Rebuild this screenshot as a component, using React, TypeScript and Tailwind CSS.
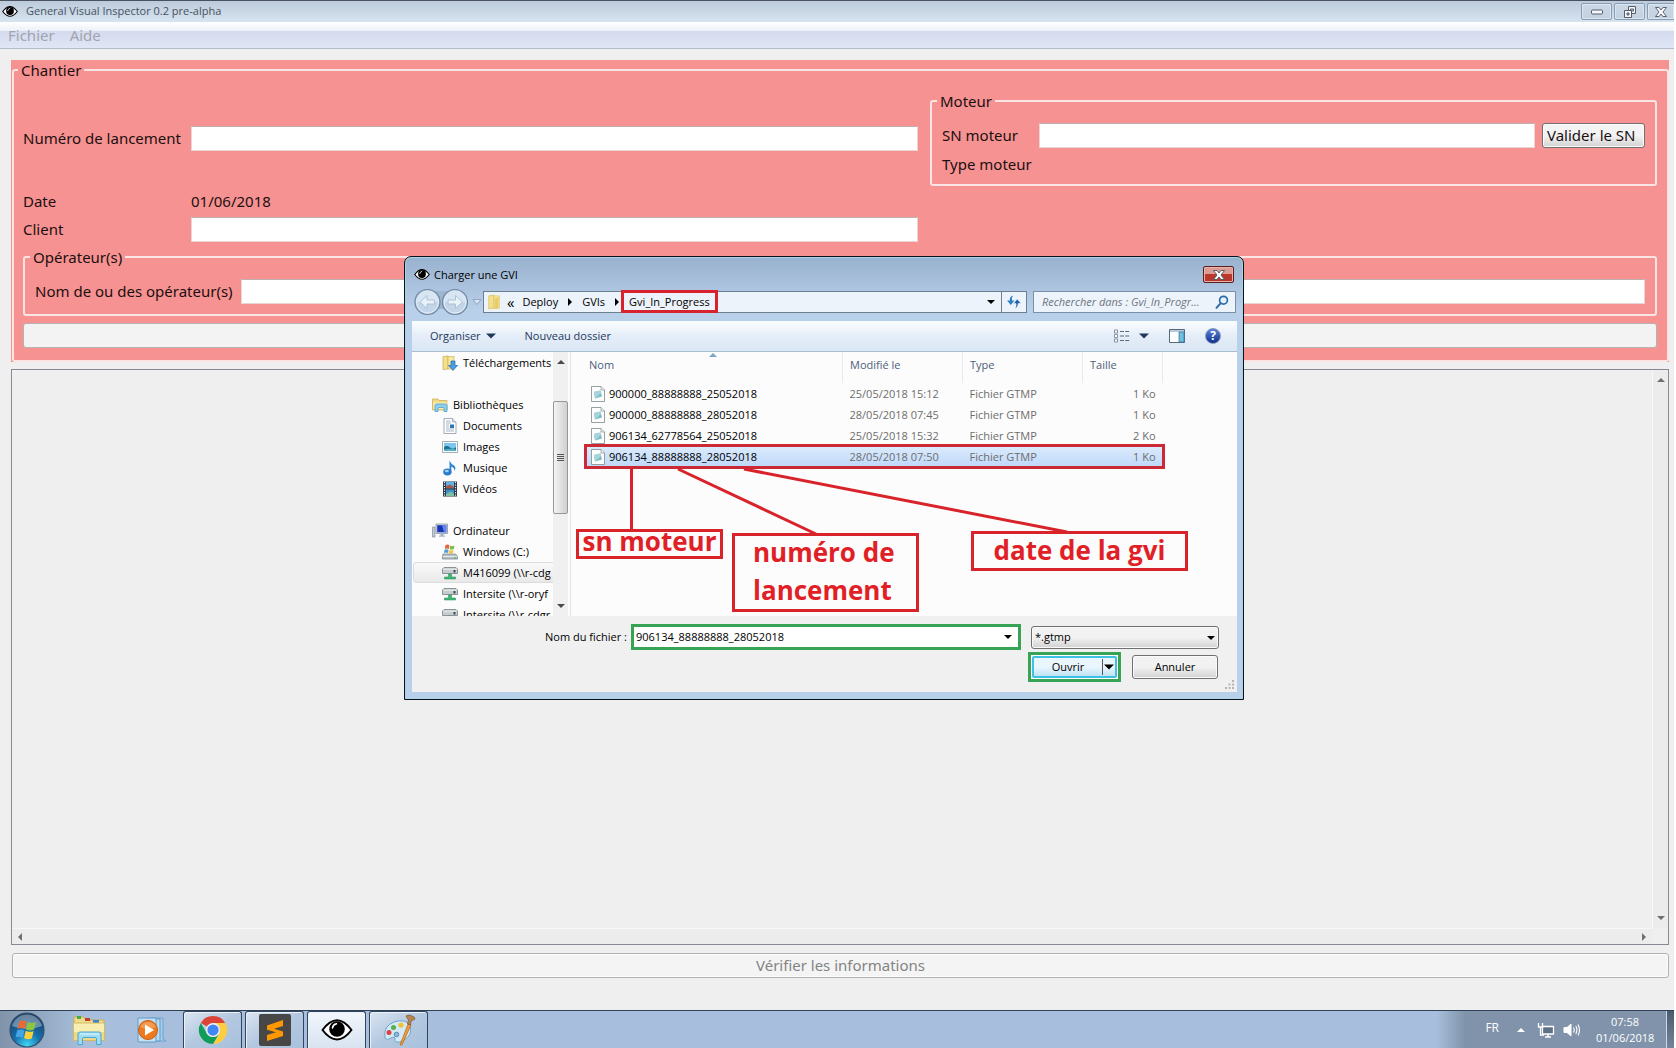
import React from "react";

/* ---------- small glyphs ---------- */

function Eye({ className = "", bold = false }: { className?: string; bold?: boolean }) {
  return (
    <svg viewBox="0 0 32 22" className={className} aria-hidden="true">
      <path d="M1.500 11Q16 -8.500 30.500 11Q16 30 1.500 11Z" fill="#fff" stroke="#000" strokeWidth={bold ? 2 : 2.400} strokeLinejoin="round" />
      <circle cx="16" cy="10" r="7.800" fill="#000" />
      <path d="M11.500 9A5 5 0 0 1 15.500 4.800" fill="none" stroke="#fff" strokeWidth="1.600" strokeLinecap="round" />
    </svg>
  );
}

function Caret({ dir = "down", className = "" }: { dir?: "down" | "up" | "left" | "right"; className?: string }) {
  const d = { down: "M0 2L8 2L4 6Z", up: "M0 6L8 6L4 2Z", left: "M6 0L6 8L2 4Z", right: "M2 0L2 8L6 4Z" }[dir];
  return (
    <svg viewBox="0 0 8 8" className={`shrink-0 ${className}`} aria-hidden="true">
      <path d={d} fill="currentColor" />
    </svg>
  );
}

const Folder = ({ className = "" }: { className?: string }) => (
  <svg viewBox="0 0 16 18" className={className} aria-hidden="true">
    <path d="M2 2L8 1V16L2 17Z" fill="#f3df8c" stroke="#d9bd5a" strokeWidth=".8" />
    <path d="M8 2H14V16H8Z" fill="#f8eaa8" stroke="#d9bd5a" strokeWidth=".8" />
    <path d="M9 5L13 3V16L9 17Z" fill="#e9cc66" />
  </svg>
);

const DownloadFolder = () => (
  <svg viewBox="0 0 16 16" className="size-4" aria-hidden="true">
    <path d="M1 1.500L6 1V14L1 14.500Z" fill="#f3df8c" stroke="#c9a94c" strokeWidth=".7" />
    <path d="M6 1.500H12V14H6Z" fill="#f8e9a0" stroke="#d2b45a" strokeWidth=".7" />
    <path d="M9 6H13V10.500H15.500L11 15.500L6.500 10.500H9Z" fill="#4a9fe0" stroke="#1c6bb0" strokeWidth=".7" />
  </svg>
);

const LibraryIcon = () => (
  <svg viewBox="0 0 16 16" className="size-4" aria-hidden="true">
    <path d="M.5 2H6L7 3.500H15V13H.5Z" fill="#f1dc86" stroke="#cba94b" strokeWidth=".7" />
    <path d="M1.500 5.500H15V12H1.500Z" fill="#f9efb9" />
    <path d="M3 8.500Q3 7 4.500 7H13.500Q15 7 15 8.500V14.500H12V11.500Q12 10.500 11 10.500H7Q6 10.500 6 11.500V14.500H3Z" fill="#8ed0ee" stroke="#3d97c8" strokeWidth=".7" />
  </svg>
);

const DocumentIcon = () => (
  <svg viewBox="0 0 16 16" className="size-4" aria-hidden="true">
    <path d="M2 .5H10.500L14 4V15.500H2Z" fill="#fff" stroke="#8b98a5" strokeWidth=".8" />
    <path d="M10.500 .5V4H14" fill="#dfe6ee" stroke="#8b98a5" strokeWidth=".7" />
    <path d="M4 3H8.500M4 5H9M4 7H7M4 9H7M4 11H12M4 13H12" stroke="#8fa3b8" strokeWidth=".8" />
    <path d="M8 6.500H12V10H8Z" fill="#2f73ad" />
  </svg>
);

const ImageIcon = () => (
  <svg viewBox="0 0 16 16" className="size-4" aria-hidden="true">
    <path d="M.5 2.500H15.500V13.500H.5Z" fill="#fff" stroke="#8d99a6" strokeWidth=".8" />
    <path d="M2 4H14V12H2Z" fill="#7cc7ee" />
    <path d="M2 8Q5 6 8 8.500T14 8V12H2Z" fill="#1f6f8a" />
    <path d="M2 10.500Q8 9 14 10.500V12H2Z" fill="#53b1c9" />
  </svg>
);

const MusicIcon = () => (
  <svg viewBox="0 0 16 16" className="size-4" aria-hidden="true">
    <path d="M7.500 0.500Q9 4 12 5.500Q14.500 7.500 12.500 11Q12.500 7.500 9.300 6.500V12.500H7.500Z" fill="#2f86cf" />
    <ellipse cx="5.400" cy="12" rx="4.200" ry="3.400" fill="#2a7dc9" />
    <ellipse cx="4.800" cy="11" rx="2" ry="1.300" fill="#9dd2f6" />
  </svg>
);

const VideoIcon = () => (
  <svg viewBox="0 0 16 16" className="size-4" aria-hidden="true">
    <path d="M1 .5H15V15.500H1Z" fill="#2a3440" />
    <path d="M4 1H12V7.300H4Z" fill="#5db3ea" />
    <path d="M4 8.500H12V15H4Z" fill="#3e92cf" />
    <path d="M4 5L8 3.500L12 6V7.300H4Z" fill="#a05a4a" />
    <path d="M4 13L9 10.500L12 13V15H4Z" fill="#7ec0a0" />
    <path d="M2.500 1V15M13.500 1V15" stroke="#e8eef4" strokeWidth="1.200" strokeDasharray="1.300 1.200" />
  </svg>
);

const ComputerIcon = () => (
  <svg viewBox="0 0 16 16" className="size-4" aria-hidden="true">
    <path d="M.5 4H3V14H.5Z" fill="#c3ccd6" stroke="#76828f" strokeWidth=".6" />
    <path d="M4 1H15.500V10.500H4Z" fill="#d8e0ea" stroke="#7a8796" strokeWidth=".7" />
    <path d="M5.200 2.200H14.300V9.300H5.200Z" fill="#1735b5" />
    <path d="M10 2.200H14.300V9.300H12Z" fill="#5f86ee" />
    <path d="M8.500 10.500H11.500V12.500H13V13.800H7V12.500H8.500Z" fill="#aab5c2" />
  </svg>
);

const WindowsDriveIcon = () => (
  <svg viewBox="0 0 16 16" className="size-4" aria-hidden="true">
    <path d="M1 10H13.500L15.500 12.500V15H.5V12.500Z" fill="#b9c3c9" stroke="#6d7a80" strokeWidth=".7" />
    <path d="M3.500 1Q6 0 7.500 1.500L6.800 5Q5 4 2.800 4.800Z" fill="#e2673a" />
    <path d="M8.300 1.800Q10.500 2.700 12.500 1.800L11.700 5.200Q9.500 6 7.600 5.200Z" fill="#7fbb42" />
    <path d="M2.600 5.500Q4.800 4.800 6.600 5.900L5.900 9Q4 8.200 1.900 9Z" fill="#4d9fde" />
    <path d="M7.400 6Q9.500 7 11.500 6.100L10.800 9.300Q8.500 10 6.700 9.200Z" fill="#f2c33a" />
    <path d="M.8 12.500H15.200" stroke="#e9eef0" strokeWidth=".8" />
    <path d="M12 13.800H14" stroke="#3dbb54" strokeWidth="1" />
  </svg>
);

const NetDriveIcon = () => (
  <svg viewBox="0 0 16 16" className="size-4" aria-hidden="true">
    <path d="M2 2.500H14L15.500 4V8.500H.5V4Z" fill="#c5cbcf" stroke="#777f84" strokeWidth=".8" />
    <path d="M1 4.200H15" stroke="#f0f3f4" strokeWidth=".9" />
    <path d="M11.500 5H13.500V7.500H11.500Z" fill="#3a4a45" />
    <path d="M6.500 9H9.500V12H13.500V14H2.500V12H6.500Z" fill="#3fb873" stroke="#1f8c52" strokeWidth=".5" />
  </svg>
);

const FileIcon = () => (
  <svg viewBox="0 0 14 16" className="h-4 w-3.5 shrink-0" aria-hidden="true">
    <path d="M.5 .5H10L13.500 4V15.500H.5Z" fill="#fcfdfd" stroke="#8c9599" strokeWidth=".9" />
    <path d="M10 .5V4H13.500" fill="#e6ecee" stroke="#8c9599" strokeWidth=".7" />
    <path d="M3 6L9.500 4.500L11 10.500L4 12.500Z" fill="#7dbcc4" />
    <path d="M3 6L9.500 4.500L10 7L4 12.500Z" fill="#a5d5db" />
  </svg>
);

const CloseGlyph = () => (
  <svg viewBox="0 0 12 10" className="h-2.5 w-3" aria-hidden="true">
    <path d="M.5 .5H4L6 3L8 .5H11.500L8 5L11.500 9.500H8L6 7L4 9.500H.5L4 5Z" fill="#fafbfc" stroke="#4d5360" strokeWidth=".9" />
  </svg>
);

/* ---------- main window ---------- */

function WindowButton({ label, narrow = false, children }: { label: string; narrow?: boolean; children: React.ReactNode }) {
  return (
    <button
      aria-label={label}
      className={`flex h-[17px] items-center justify-center border border-[#8b9bb3] bg-gradient-to-b from-[#cbd8e6] to-[#c2d1e0] shadow-[inset_0_0_0_1px_#dbe6f0] ${narrow ? "w-[27px] rounded-l-[2px] border-r-0" : "w-[31px] rounded-[2px]"}`}
    >
      {children}
    </button>
  );
}

function TitleBar() {
  return (
    <header className="flex h-[22px] items-center border-t border-[#4a5262] bg-gradient-to-b from-[#bccbdb] to-[#d7e4f0] pl-[2px] font-['Open_Sans',sans-serif] text-[11px] text-[#46525f]">
      <Eye className="h-[11px] w-4" />
      <h1 className="ml-2 flex-1">General Visual Inspector 0.2 pre-alpha</h1>
      <div className="flex gap-[2px]">
        <WindowButton label="Réduire">
          <svg viewBox="0 0 12 6" className="h-1.5 w-3"><rect x=".5" y="1" width="11" height="4" rx="1" fill="#f4f6f9" stroke="#555d6b" /></svg>
        </WindowButton>
        <WindowButton label="Restaurer">
          <svg viewBox="0 0 12 12" className="size-3">
            <path d="M4.500 .5H11.500V7.500H4.500ZM6.500 3H9.500V5H6.500Z" fill="#f4f6f9" stroke="#555d6b" fillRule="evenodd" />
            <path d="M.5 4.500H7.500V11.500H.5ZM3 7H5V9H3Z" fill="#f4f6f9" stroke="#555d6b" fillRule="evenodd" />
          </svg>
        </WindowButton>
        <WindowButton label="Fermer" narrow><CloseGlyph /></WindowButton>
      </div>
    </header>
  );
}

const fieldClass = "h-[25px] w-full min-w-0 border border-[#e9d4d4] border-t-[#bfaeae] bg-white px-1 text-[15px] outline-none";
const groupClass = "min-w-0 rounded-[3px] border-2 border-[#fbe4e4]";
const legendClass = "-ml-[5px] h-5 px-[3px] leading-5";

function Chantier() {
  return (
    <div className="bg-[#f79292]">
      <fieldset className={`ml-px pr-2.5 pb-3 pl-[9px] ${groupClass}`}>
        <legend className={legendClass}>Chantier</legend>
        <div className="grid grid-cols-[156px_1fr_1fr] items-center gap-x-3 gap-y-[5px] pt-[11px]">
          <label htmlFor="lancement" className="whitespace-nowrap">Numéro de lancement</label>
          <input id="lancement" className={fieldClass} />
          <fieldset className={`pr-2.5 pb-2 pl-2.5 ${groupClass}`}>
            <legend className={legendClass}>Moteur</legend>
            <div className="grid grid-cols-[90px_1fr_103px] items-center gap-x-[7px] gap-y-1 pt-3">
              <label htmlFor="sn">SN moteur</label>
              <input id="sn" className={fieldClass} />
              <button className="h-[25px] rounded-[3px] border border-[#707070] bg-gradient-to-b from-[#f3f3f3] from-50% to-[#d2d2d2] pl-1 text-left whitespace-nowrap shadow-[inset_0_0_0_1px_#fbfbfb]">Valider le SN</button>
              <span className="col-span-3 leading-6">Type moteur</span>
            </div>
          </fieldset>
          <span className="leading-[21px]">Date</span>
          <span className="col-span-2 leading-[21px]">01/06/2018</span>
          <label htmlFor="client">Client</label>
          <input id="client" className={fieldClass} />
          <fieldset className={`col-span-3 pr-2.5 pb-2.5 pl-2.5 ${groupClass}`}>
            <legend className={legendClass}>Opérateur(s)</legend>
            <div className="flex items-center gap-2 pt-3">
              <label htmlFor="operateurs" className="whitespace-nowrap">Nom de ou des opérateur(s)</label>
              <input id="operateurs" className={fieldClass} />
            </div>
          </fieldset>
          <button aria-label="Valider les opérateurs" disabled className="col-span-3 mt-[2px] h-[25px] rounded-[3px] border border-[#b9b0b0] bg-[#f3f3f3]" />
        </div>
      </fieldset>
    </div>
  );
}

function ScrollArea() {
  return (
    <section aria-label="Inspection" className="grid flex-1 grid-cols-[1fr_16px] grid-rows-[1fr_16px] border border-[#868a95] bg-[#efefef] text-[#6f6f6f]">
      <div />
      <div className="flex flex-col items-center justify-between border-l border-[#f8f8f8] bg-[#ececec] py-1.5">
        <Caret dir="up" className="size-2" />
        <Caret className="size-2" />
      </div>
      <div className="flex items-center justify-between border-t border-[#f8f8f8] bg-[#ececec] px-1">
        <Caret dir="left" className="size-2" />
        <Caret dir="right" className="size-2" />
      </div>
    </section>
  );
}

/* ---------- file dialog ---------- */

const places: { label: string; icon: React.ReactNode; root?: boolean; gap?: boolean; active?: boolean }[] = [
  { label: "Téléchargements", icon: <DownloadFolder /> },
  { label: "Bibliothèques", icon: <LibraryIcon />, root: true, gap: true },
  { label: "Documents", icon: <DocumentIcon /> },
  { label: "Images", icon: <ImageIcon /> },
  { label: "Musique", icon: <MusicIcon /> },
  { label: "Vidéos", icon: <VideoIcon /> },
  { label: "Ordinateur", icon: <ComputerIcon />, root: true, gap: true },
  { label: "Windows (C:)", icon: <WindowsDriveIcon /> },
  { label: "M416099 (\\\\r-cdg", icon: <NetDriveIcon />, active: true },
  { label: "Intersite (\\\\r-oryf", icon: <NetDriveIcon /> },
  { label: "Intersite (\\\\r-cdgr", icon: <NetDriveIcon /> },
];

const files = [
  { name: "900000_88888888_25052018", date: "25/05/2018 15:12", size: "1 Ko" },
  { name: "900000_88888888_28052018", date: "28/05/2018 07:45", size: "1 Ko" },
  { name: "906134_62778564_25052018", date: "25/05/2018 15:32", size: "2 Ko" },
  { name: "906134_88888888_28052018", date: "28/05/2018 07:50", size: "1 Ko", selected: true },
];

function AddressBar() {
  return (
    <div className="flex h-[39px] items-center pr-px">
      <svg viewBox="0 0 54 28" className="ml-[2px] h-7 w-[54px] shrink-0" aria-hidden="true">
        <rect x="3" y="3" width="48" height="18" rx="9" fill="#9fb6cf" />
        {[13.5, 41].map((x) => (
          <g key={x}>
            <circle cx={x} cy="14" r="12.500" fill="#b7cce2" stroke="#6f86a0" strokeWidth="1.200" />
            <circle cx={x} cy="14" r="11" fill="#c3d5e8" stroke="#e6eff8" strokeWidth="1" />
            <path d={`M${x - 11} 14A11 11 0 0 1 ${x + 11} 14Z`} fill="#d8e5f2" />
          </g>
        ))}
        <path d="M6 14L13 7.500V12H20.500V16H13V20.500Z" fill="#e9f1f9" stroke="#a9bdd2" strokeWidth=".9" />
        <path d="M48.500 14L41.500 7.500V12H34V16H41.500V20.500Z" fill="#e9f1f9" stroke="#a9bdd2" strokeWidth=".9" />
      </svg>
      <svg viewBox="0 0 10 8" className="mr-px ml-1 h-2 w-2.5 shrink-0" aria-hidden="true">
        <path d="M1 1.500H9L5 6.500Z" fill="#dbe7f3" stroke="#8fa7c2" />
      </svg>
      <div className="flex h-[22px] flex-1 items-center border border-[#6f7f92] bg-[#edf3fa] pl-[3px]">
        <Folder className="h-4 w-3.5" />
        <nav aria-label="Chemin" className="flex flex-1 items-center">
          <span className="ml-1.5 text-[15px] leading-4">«</span>
          <a href="#deploy" className="ml-2">Deploy</a>
          <Caret dir="right" className="mx-2 size-2" />
          <a href="#gvis">GVIs</a>
          <Caret dir="right" className="ml-2 size-2" />
          <a href="#gvi-in-progress" className="border-3 border-[#d8232e] px-[5px] leading-[17px]">Gvi_In_Progress</a>
        </nav>
        <Caret className="mr-1.5 size-2" />
        <button aria-label="Actualiser" className="flex h-5 w-[25px] items-center justify-center border-l border-[#6f7f92]">
          <svg viewBox="0 0 16 14" className="h-3.5 w-4">
            <path d="M7 .5Q3.500 1.500 3.800 5.500H1L4.800 10L8.500 5.500H6Q5.500 2.500 7 .5Z" fill="#2b7fc4" />
            <path d="M9 13.500Q12.500 12.500 12.200 8.500H15L11.200 4L7.500 8.500H10Q10.500 11.500 9 13.500Z" fill="#1b5fa8" stroke="#edf3fa" strokeWidth=".6" />
          </svg>
        </button>
      </div>
      <div className="ml-1.5 flex h-[22px] w-[203px] items-center border border-[#7d8fa5] bg-[#edf3fa] pr-1.5 pl-2">
        <input aria-label="Rechercher" placeholder="Rechercher dans : Gvi_In_Progr..." className="w-full min-w-0 flex-1 bg-transparent italic outline-none placeholder:text-[#6d7580]" />
        <svg viewBox="0 0 14 14" className="size-3.5 shrink-0" aria-hidden="true">
          <circle cx="8.500" cy="5.200" r="3.900" fill="#e4f1fb" stroke="#2b6cab" strokeWidth="1.700" />
          <path d="M5.700 8.200L1.500 12.800" stroke="#2b6cab" strokeWidth="2" strokeLinecap="round" />
        </svg>
      </div>
    </div>
  );
}

function Toolbar() {
  return (
    <div className="flex h-[31px] items-center border-b border-[#a9bdd3] bg-gradient-to-b from-[#f8fbfe] from-10% via-[#e4edf8] via-50% to-[#dbe7f5] pr-4 pl-[18px] text-[#1e395b]">
      <button className="flex items-center gap-1">Organiser <Caret className="ml-px size-2.5" /></button>
      <button className="ml-[29px]">Nouveau dossier</button>
      <span className="flex-1" />
      <button aria-label="Affichage" className="flex items-center">
        <svg viewBox="0 0 16 14" className="h-3.5 w-4">
          <path d="M.5 1H3.500V4H.5ZM.5 5.500H3.500V8.500H.5ZM.5 10H3.500V13H.5Z" fill="#fff" stroke="#7b8898" strokeWidth=".9" />
          <path d="M6 2.500H15.500M6 7H15.500M6 11.500H15.500" stroke="#5c6b7e" strokeWidth="1.200" strokeDasharray="4 1.200" />
        </svg>
        <Caret className="ml-[9px] size-2.5" />
      </button>
      <button aria-label="Volet de visualisation" className="ml-5">
        <svg viewBox="0 0 16 14" className="h-3.5 w-4">
          <path d="M.5 .5H15.500V13.500H.5Z" fill="#fff" stroke="#56687c" />
          <path d="M1 1H15V3H1Z" fill="#b9c9da" />
          <path d="M10 3H15V13H10Z" fill="#6fbfe0" stroke="#3c7fa3" strokeWidth=".8" />
        </svg>
      </button>
      <button aria-label="Aide" className="ml-5 flex size-4 items-center justify-center rounded-full border border-[#8796b4] bg-gradient-to-b from-[#5c82d8] to-[#12308f] text-[12px] leading-none font-bold text-white">?</button>
    </div>
  );
}

function Places() {
  return (
    <aside className="flex w-[159px] shrink-0">
      <ul className="min-w-0 flex-1 overflow-hidden">
        {places.map((p, i) => (
          <li key={i} className={p.gap ? "pt-[21px]" : ""}>
            <div className={`flex h-[21px] items-center gap-[5px] whitespace-nowrap ${p.root ? "pl-5" : p.active ? "ml-px rounded-l-sm border border-r-0 border-[#dcdcdc] bg-gradient-to-b from-[#fafafa] to-[#e9e9e9] pl-7" : "pl-[30px]"}`}>
              <span className="shrink-0">{p.icon}</span>
              {p.label}
            </div>
          </li>
        ))}
      </ul>
      <div className="flex w-[15px] shrink-0 flex-col items-center bg-[#f0f0f0] py-1.5 text-[#4a4a4a]">
        <Caret dir="up" className="size-2" />
        <div className="mt-[35px] flex h-[113px] w-[15px] flex-col items-center justify-center gap-px rounded-[2px] border border-[#979797] bg-gradient-to-r from-[#f4f4f4] to-[#cfcfcf]">
          {[0, 1, 2, 3].map((n) => (
            <span key={n} className="h-px w-[7px] bg-[#555]" />
          ))}
        </div>
        <span className="flex-1" />
        <Caret className="size-2" />
      </div>
      <div className="w-[3px] border-r border-[#dfe6ee]" />
    </aside>
  );
}

function FileList() {
  const head = "relative h-[31px] border-r border-[#e3e9f1] pb-1.5 text-left align-middle font-normal text-[#4c607a]";
  return (
    <div className="relative flex-1 overflow-hidden pl-[15px]">
      <table className="w-[577px] table-fixed border-collapse">
        <colgroup>
          <col />
          <col className="w-[120px]" />
          <col className="w-[120px]" />
          <col className="w-20" />
        </colgroup>
        <thead>
          <tr>
            <th className={`${head} pl-[3px]`}>
              Nom
              <Caret dir="up" className="absolute -top-px left-[123px] size-2 text-[#7ba6c4]" />
            </th>
            <th className={`${head} pl-[7px]`}>Modifié le</th>
            <th className={`${head} pl-[7px]`}>Type</th>
            <th className={`${head} pl-[7px]`}>Taille</th>
          </tr>
        </thead>
        <tbody>
          {files.map((f) => (
            <tr key={f.name} className={`h-[21px] text-[#6d6d6d] ${f.selected ? "bg-gradient-to-b from-[#dcebfc] to-[#bed8fa] outline-3 -outline-offset-1 outline-[#cc2936]" : ""}`}>
              <td className="p-0 pl-[5px]">
                <span className="flex items-center gap-1 text-black">
                  <FileIcon />
                  {f.name}
                </span>
              </td>
              <td className="p-0 pl-[7px]">{f.date}</td>
              <td className="p-0 pl-[7px]">Fichier GTMP</td>
              <td className="p-0 pr-[7px] text-right">{f.size}</td>
            </tr>
          ))}
        </tbody>
      </table>
      <Annotations />
    </div>
  );
}

/* Callouts drawn over the list, explaining the parts of a file name. */
function Annotations() {
  return (
    <div className="pointer-events-none absolute inset-0 text-[26px] font-bold text-[#e11f26]">
      <svg viewBox="0 0 665 264" className="absolute top-0 left-0 h-[264px] w-[665px]" stroke="#d8232a" strokeWidth="3" aria-hidden="true">
        <path d="M60.500 117V178M107 117L245 182M173 117L496 180" fill="none" />
      </svg>
      <p className="absolute top-[177px] left-[5px] h-[30px] w-[147px] border-3 border-[#d8232a] text-center leading-[18px] whitespace-nowrap">sn moteur</p>
      <p className="absolute top-[181px] left-[161px] flex h-[79px] w-[187px] items-end border-3 border-[#d8232a] pl-[18px] leading-[38px]">numéro de lancement</p>
      <p className="absolute top-[179px] left-[400px] h-10 w-[217px] border-3 border-[#d8232a] text-center leading-8 whitespace-nowrap">date de la gvi</p>
    </div>
  );
}

function DialogFooter() {
  return (
    <div className="relative h-[76px] bg-[#f0f0f0] pt-2 pr-[18px]">
      <div className="flex h-[26px] items-center justify-end">
        <label htmlFor="nom-fichier">Nom du fichier :</label>
        <div className="ml-1 flex h-[26px] w-[390px] items-center border-3 border-[#37a354] bg-white pr-1.5">
          <input id="nom-fichier" defaultValue="906134_88888888_28052018" className="min-w-0 flex-1 pl-[2px] outline-none" />
          <Caret className="size-2" />
        </div>
        <div className="relative ml-[10px]">
          <select aria-label="Type de fichier" className="h-[23px] w-[188px] appearance-none rounded-[3px] border border-[#707070] bg-gradient-to-b from-[#f2f2f2] from-50% to-[#d2d2d2] pl-[3px] shadow-[inset_0_0_0_1px_#fafafa]">
            <option>*.gtmp</option>
          </select>
          <Caret className="pointer-events-none absolute top-2 right-1 size-2" />
        </div>
      </div>
      <div className="mt-[2px] flex items-center justify-end gap-[11px] pr-px">
        <div className="flex h-[30px] w-[93px] border-3 border-[#37a354] bg-white p-px">
          <div className="flex flex-1 rounded-[2px] border-2 border-[#3fc0e6] bg-gradient-to-b from-[#eaf6fd] from-50% to-[#bfe2f5]">
            <button className="flex-1">Ouvrir</button>
            <button aria-label="Options d'ouverture" className="my-px flex w-[13px] items-center justify-center border-l border-[#555]">
              <Caret className="size-2.5" />
            </button>
          </div>
        </div>
        <button className="h-6 w-[86px] rounded-[3px] border border-[#707070] bg-gradient-to-b from-[#f2f2f2] from-50% to-[#d2d2d2] shadow-[inset_0_0_0_1px_#fafafa]">Annuler</button>
      </div>
      <svg viewBox="0 0 10 10" className="absolute right-[2px] bottom-[2px] size-2.5" fill="#b5b5b5" aria-hidden="true">
        <path d="M7 0H9V2H7ZM7 3.500H9V5.500H7ZM7 7H9V9H7ZM3.500 3.500H5.500V5.500H3.500ZM3.500 7H5.500V9H3.500ZM0 7H2V9H0Z" />
      </svg>
    </div>
  );
}

function FileDialog() {
  return (
    <div role="dialog" aria-label="Charger une GVI" className="absolute top-[256px] left-[404px] w-[840px] rounded-t-[7px] border border-[#0b1118] bg-gradient-to-b from-[#98b1ce] to-[#b9d0ea] to-12% pr-1.5 pb-[7px] pl-[7px] font-['Open_Sans',sans-serif] text-[11px] leading-4 text-black shadow-[inset_0_0_0_1px_#a9d3e6]">
      <div className="flex h-[25px] items-center pt-2.5 pr-[3px] pl-[2px]">
        <Eye className="h-[11px] w-4" />
        <h2 className="ml-1 flex-1">Charger une GVI</h2>
        <button aria-label="Fermer" className="flex h-[17px] w-[31px] items-center justify-center rounded-[2px] border border-[#5a1f23] bg-gradient-to-b from-[#dd9c93] from-50% to-[#b8392b] to-50% shadow-[inset_0_0_0_1px_#e6b2aa]">
          <CloseGlyph />
        </button>
      </div>
      <AddressBar />
      <Toolbar />
      <div className="flex h-[264px] overflow-hidden bg-[#fcfcfc]">
        <Places />
        <FileList />
      </div>
      <DialogFooter />
    </div>
  );
}

/* ---------- taskbar ---------- */

const StartOrb = () => (
  <svg viewBox="0 0 36 36" className="size-9" aria-hidden="true">
    <defs>
      <radialGradient id="orb" cx=".5" cy=".95" r=".9">
        <stop offset="0" stopColor="#3fd8f5" />
        <stop offset=".45" stopColor="#1670ad" />
        <stop offset="1" stopColor="#1b3f66" />
      </radialGradient>
    </defs>
    <circle cx="18" cy="18" r="17" fill="url(#orb)" stroke="#35506d" strokeWidth="1.200" />
    <path d="M3 14A15.500 15.500 0 0 1 33 14Q18 20 3 14Z" fill="#fff" opacity=".35" />
    <path d="M10.500 9.500Q14 7.500 17.500 9.500L15.800 17Q12 15 8.500 17Z" fill="#ea6a35" />
    <path d="M18.700 10Q22.500 12 27 10L25 17.500Q21 19.500 17 17.500Z" fill="#8cc63f" />
    <path d="M8.200 18.300Q12 16.500 15.500 18.300L13.800 25.500Q10 24 6.500 25.500Z" fill="#45a5e6" />
    <path d="M16.700 18.800Q20.500 20.800 24.700 18.900L22.800 26.500Q19 28.200 15 26Z" fill="#fbcf3b" />
  </svg>
);

const ExplorerIcon = () => (
  <svg viewBox="0 0 34 32" className="h-8 w-[34px]" aria-hidden="true">
    <path d="M2 3H12L14 6H32V26H2Z" fill="#f0dc8b" stroke="#c9ab52" />
    <path d="M5 2H9V5H5Z" fill="#44ad4a" />
    <path d="M13 4H18V7H13Z" fill="#c63c34" />
    <path d="M21 6H27V9H21Z" fill="#3a84cf" />
    <path d="M1.500 9H32.500V26.500H1.500Z" fill="#f9eeb2" stroke="#d5b964" />
    <path d="M2 18H32V26H2Z" fill="#eed987" />
    <path d="M6 20Q6 18 8 18H27Q29 18 29 20V30.500H24.500V25Q24.500 23.500 23 23.500H12Q10.500 23.500 10.500 25V30.500H6Z" fill="#9edcf3" stroke="#4ba6cf" />
    <path d="M8 20H27" stroke="#e4f7fd" />
  </svg>
);

const PlayerIcon = () => (
  <svg viewBox="0 0 30 28" className="h-7 w-[30px]" aria-hidden="true">
    <path d="M10 2H26V23L29 25H10Z" fill="#a9cce8" stroke="#6ba3cf" />
    <path d="M6 3H23V25H6Z" fill="#b9d9ef" stroke="#5f9cc9" />
    <path d="M1 2H19V26H1Z" fill="#c5e0f3" stroke="#5f9cc9" />
    <circle cx="11" cy="14" r="9.500" fill="#ee7a20" stroke="#c75e12" />
    <path d="M3 11A9 9 0 0 1 19 11Q11 15 3 11Z" fill="#f7a964" opacity=".7" />
    <path d="M8 8.500L17 14L8 19.500Z" fill="#fff" />
  </svg>
);

const ChromeIcon = () => (
  <svg viewBox="0 0 48 48" className="size-[30px]" aria-hidden="true">
    <path d="M24 24L4.500 12.700A22.500 22.500 0 0 1 43.500 12.700L24 12.700Z" fill="#db4437" />
    <path d="M43.500 12.700A22.500 22.500 0 0 1 24 46.500L33.800 29.600A11.300 11.300 0 0 0 24 12.700Z" fill="#ffcd40" />
    <path d="M24 46.500A22.500 22.500 0 0 1 4.500 12.700L14.200 29.600A11.300 11.300 0 0 0 33.800 29.600Z" fill="#0f9d58" />
    <circle cx="24" cy="24" r="11.300" fill="#f1f1f1" />
    <circle cx="24" cy="24" r="9" fill="#4285f4" />
  </svg>
);

const SublimeIcon = () => (
  <svg viewBox="0 0 32 32" className="size-8" aria-hidden="true">
    <rect width="32" height="32" rx="2" fill="#474747" />
    <path d="M8 11.500L24 6V12L15 14.800L24 17.500V22L8 27V21L17 18.200L8 15.700Z" fill="#ff9800" />
  </svg>
);

const PaintIcon = () => (
  <svg viewBox="0 0 34 32" className="h-8 w-[34px]" aria-hidden="true">
    <path d="M3 24Q1 12 12 8Q24 4 28 12Q31 21 22 26Q17 29 14 28Q12 27 13 25Q13 22 9 24Q5 27 3 24Z" fill="#d4e9f6" stroke="#6fa3c6" />
    <circle cx="7" cy="18.500" r="2.500" fill="#d8433b" />
    <circle cx="11.500" cy="13.500" r="2.500" fill="#56b04a" />
    <circle cx="19" cy="11" r="2.600" fill="#f1c232" />
    <circle cx="14.500" cy="20.500" r="2.300" fill="#8db8d8" stroke="#5a8db3" />
    <path d="M26 10L29 11L20 31L18 31Z" fill="#ee9a3a" stroke="#b5691d" strokeWidth=".7" />
    <path d="M24 2Q27 0 30 2Q33 3 33 5L29 7L28.500 11L25.500 9.800L26.500 6Z" fill="#b78454" stroke="#7d5430" strokeWidth=".7" />
  </svg>
);

function TaskButton({ label, active = false, children }: { label: string; active?: boolean; children: React.ReactNode }) {
  return (
    <button aria-label={label} className={`flex h-[37px] w-[59px] items-center justify-center rounded-t-[3px] border border-b-0 border-[#33455c] shadow-[inset_1px_1px_0_0_#e9f1f9] ${active ? "bg-gradient-to-b from-[#f2f6fb] to-[#d8e4f1]" : "bg-gradient-to-br from-[#dbe5f1] via-[#b3c8e0] to-[#a9c1dd]"}`}>
      {children}
    </button>
  );
}

function Taskbar() {
  return (
    <footer className="flex h-[38px] items-end border-t border-[#2f4156] bg-gradient-to-r from-[#8093aa] from-0% via-[#a7bfdc] via-5% to-[#a7bfdc] font-['Open_Sans',sans-serif] text-[11px] text-white">
      <button aria-label="Démarrer" className="ml-[9px] shrink-0"><StartOrb /></button>
      <button aria-label="Explorateur" className="ml-[27px] self-center"><ExplorerIcon /></button>
      <button aria-label="Lecteur multimédia" className="ml-[31px] self-center"><PlayerIcon /></button>
      <div className="ml-4 flex gap-[3px]">
        <TaskButton label="Chrome"><ChromeIcon /></TaskButton>
        <TaskButton label="Sublime Text"><SublimeIcon /></TaskButton>
        <TaskButton label="General Visual Inspector" active><Eye bold className="h-[22px] w-8" /></TaskButton>
        <TaskButton label="Paint"><PaintIcon /></TaskButton>
      </div>
      <span className="flex-1" />
      <div className="flex h-full items-center bg-gradient-to-r from-[#a7bfdc] to-[#8093aa] to-12% pl-12">
        <span className="pb-1 text-[12px]">FR</span>
        <Caret dir="up" className="ml-[18px] size-2" />
        <svg viewBox="0 0 18 16" className="ml-3 h-4 w-[18px]" aria-label="Réseau">
          <path d="M5.500 4.500H16.500V12H5.500Z" fill="#5f7186" stroke="#fff" strokeWidth="1.300" />
          <path d="M8 15H14M11 12V15" stroke="#fff" strokeWidth="1.500" />
          <path d="M1.500 1V5H5.500V1M3.500 5V13H7" fill="none" stroke="#fff" strokeWidth="1.300" />
        </svg>
        <svg viewBox="0 0 18 16" className="ml-2 h-4 w-[18px]" fill="none" stroke="#fff" aria-label="Volume">
          <path d="M1 5.500H4L8 2V14L4 10.500H1Z" fill="#fff" />
          <path d="M10.500 5.500Q12 8 10.500 10.500M12.800 4Q15 8 12.800 12M15 2.500Q18 8 15 13.500" strokeWidth="1.100" />
        </svg>
        <div className="ml-[15px] w-[58px] text-center leading-4">
          <time className="block">07:58</time>
          <time className="block">01/06/2018</time>
        </div>
        <button aria-label="Afficher le bureau" className="ml-3 h-full w-2 border-l border-[#d0dae6] bg-gradient-to-b from-[#4c5c70] to-[#74869c]" />
      </div>
    </footer>
  );
}

export default function App() {
  return (
    <div className="relative flex min-h-screen flex-col bg-white pr-[2px] font-['Noto_Sans',sans-serif] text-[15px] text-[#1a1010]">
      <TitleBar />
      <nav className="flex h-[27px] items-center gap-[15px] border-b border-[#b3bccb] [background-image:linear-gradient(#ffffff,#eef1f8_33%,#d4daee_34%,#e1e6f6)] pt-px pl-2 text-[#a2a5ad]">
        <button>Fichier</button>
        <button>Aide</button>
      </nav>
      <main className="flex flex-1 flex-col bg-[#efefef] pt-[11px] pr-[5px] pb-8 pl-[11px]">
        <Chantier />
        <div className="flex flex-1 flex-col pt-[7px] pb-2">
          <ScrollArea />
        </div>
        <button disabled className="ml-px h-[25px] rounded-[3px] border border-[#adb2b5] bg-[#f4f4f4] text-[#838383] shadow-[inset_0_0_0_1px_#fcfcfc]">Vérifier les informations</button>
      </main>
      <Taskbar />
      <FileDialog />
    </div>
  );
}
